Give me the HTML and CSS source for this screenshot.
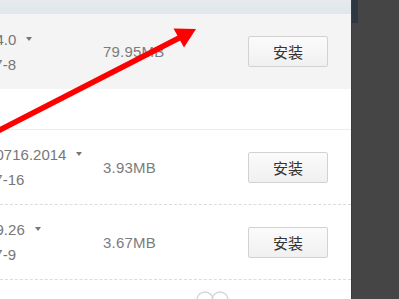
FILE: index.html
```html
<!DOCTYPE html>
<html lang="zh-CN">
<head>
<meta charset="utf-8">
<title>软件列表</title>
<link rel="stylesheet" href="styles.css">
</head>
<body>
<div class="screen">
  <main class="list">
    <div class="topbar"></div>
    <div class="row row-hover">
      <div class="name">
        <div class="ver">3.0.1.4.0<span class="caret"></span></div>
        <div class="date">2014-7-8</div>
      </div>
      <div class="size">79.95MB</div>
      <button class="install">安装</button>
    </div>
    <div class="gap"></div>
    <div class="row dashed">
      <div class="name">
        <div class="ver">2.0.1.0716.2014<span class="caret"></span></div>
        <div class="date">2014-7-16</div>
      </div>
      <div class="size">3.93MB</div>
      <button class="install">安装</button>
    </div>
    <div class="row dashed">
      <div class="name">
        <div class="ver">3.0.1.9.26<span class="caret"></span></div>
        <div class="date">2014-7-9</div>
      </div>
      <div class="size">3.67MB</div>
      <button class="install">安装</button>
    </div>
    <div class="foot">
      <svg class="more" width="34" height="14" viewBox="0 0 34 14">
        <circle cx="9" cy="11" r="8" fill="none" stroke="#d6d6d6" stroke-width="1.4"/>
        <circle cx="24" cy="11" r="8" fill="none" stroke="#d6d6d6" stroke-width="1.4"/>
      </svg>
    </div>
  </main>
  <aside class="side"><div class="strip"></div></aside>
  <svg class="arrow" width="399" height="299" viewBox="0 0 399 299">
    <line x1="-10" y1="135" x2="181" y2="37" stroke="#ff0000" stroke-width="5.5"/>
    <polygon points="196,29 173.5,28.5 184,47.5" fill="#ff0000"/>
  </svg>
</div>
</body>
</html>
```

FILE: styles.css
```css
html, body {
  margin: 0;
  padding: 0;
  background: #454545;
}

.screen {
  position: relative;
  display: flex;
  width: 399px;
  height: 299px;
  overflow: hidden;
  font-family: "Liberation Sans", "Noto Sans CJK SC", sans-serif;
}

.list {
  width: 351px;
  flex: none;
  background: #ffffff;
  display: flex;
  flex-direction: column;
  overflow: hidden;
}

.topbar {
  height: 14px;
  flex: none;
  background: linear-gradient(#e6eaee, #e1e7ec);
}

.row {
  box-sizing: border-box;
  height: 75px;
  display: flex;
  align-items: center;
  flex: none;
}

.row-hover {
  background: #f4f4f4;
}

.dashed {
  border-bottom: 1px dashed #dcdcdc;
}

.gap {
  height: 40px;
  flex: none;
  border-bottom: 1px solid #ececec;
}

.name {
  width: 145px;
  margin-left: -42px;
  flex: none;
  font-size: 15px;
  line-height: 25px;
  color: #777777;
  white-space: nowrap;
}

.date {
  margin-left: -2px;
}

.caret {
  display: inline-block;
  width: 0;
  height: 0;
  margin-left: 10px;
  vertical-align: 4px;
  border-left: 3.5px solid transparent;
  border-right: 3.5px solid transparent;
  border-top: 4px solid #777777;
}

.size {
  width: 145px;
  flex: none;
  font-size: 15px;
  letter-spacing: 0.2px;
  color: #7c7c7c;
}

.install {
  box-sizing: border-box;
  width: 80px;
  height: 31px;
  flex: none;
  padding: 0;
  border: 1px solid #d2d2d2;
  border-radius: 2px;
  background: linear-gradient(#fbfbfb, #f0f0f0);
  font-family: "Noto Sans CJK SC", "Liberation Sans", sans-serif;
  font-size: 15px;
  color: #333333;
}

.foot {
  flex: 1;
  min-height: 0;
  padding-left: 196px;
  padding-top: 9px;
}

.more {
  display: block;
}

.side {
  flex: 1;
  background: #454545;
  border-left: 1px solid #3c3c3c;
}

.strip {
  width: 6px;
  height: 23px;
  background: #2e3842;
}

.arrow {
  position: absolute;
  left: 0;
  top: 0;
  pointer-events: none;
}
```
